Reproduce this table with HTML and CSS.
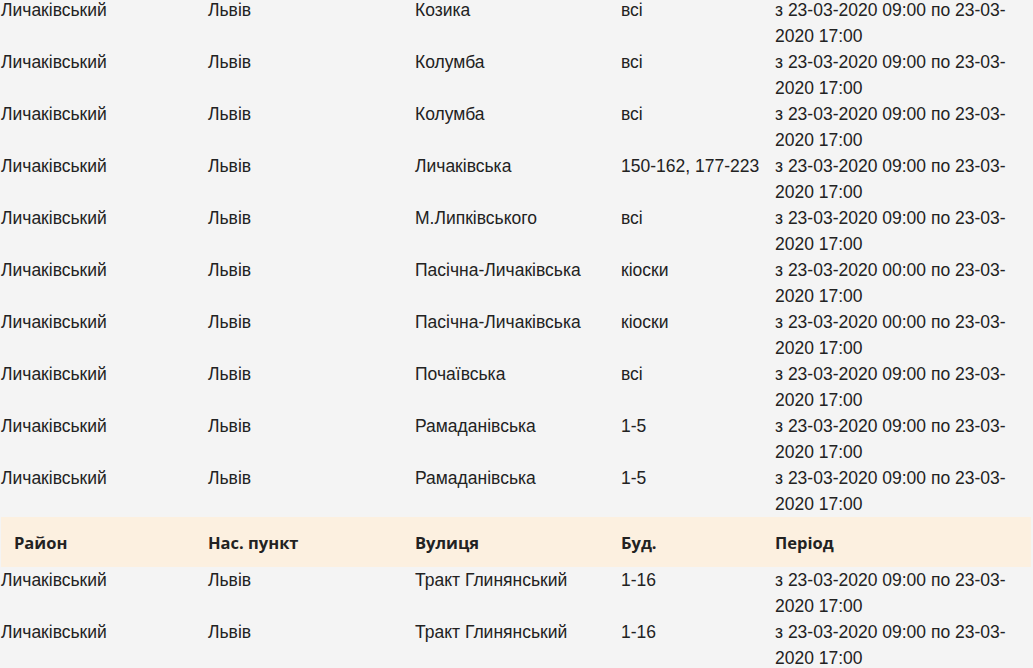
FILE: index.html
```html
<!DOCTYPE html>
<html lang="uk">
<head>
<meta charset="utf-8">
<title>Відключення</title>
<link rel="stylesheet" href="styles.css">
</head>
<body>
<div class="wrap">
<table class="outages">
<colgroup>
<col class="c1"><col class="c2"><col class="c3"><col class="c4"><col class="c5">
</colgroup>
<tbody>
<tr><td>Личаківський</td><td>Львів</td><td>Козика</td><td>всі</td><td>з 23-03-2020 09:00 по 23-03-<wbr>2020 17:00</td></tr>
<tr><td>Личаківський</td><td>Львів</td><td>Колумба</td><td>всі</td><td>з 23-03-2020 09:00 по 23-03-<wbr>2020 17:00</td></tr>
<tr><td>Личаківський</td><td>Львів</td><td>Колумба</td><td>всі</td><td>з 23-03-2020 09:00 по 23-03-<wbr>2020 17:00</td></tr>
<tr><td>Личаківський</td><td>Львів</td><td>Личаківська</td><td>150-162, 177-223</td><td>з 23-03-2020 09:00 по 23-03-<wbr>2020 17:00</td></tr>
<tr><td>Личаківський</td><td>Львів</td><td>М.Липківського</td><td>всі</td><td>з 23-03-2020 09:00 по 23-03-<wbr>2020 17:00</td></tr>
<tr><td>Личаківський</td><td>Львів</td><td>Пасічна-Личаківська</td><td>кіоски</td><td>з 23-03-2020 00:00 по 23-03-<wbr>2020 17:00</td></tr>
<tr><td>Личаківський</td><td>Львів</td><td>Пасічна-Личаківська</td><td>кіоски</td><td>з 23-03-2020 00:00 по 23-03-<wbr>2020 17:00</td></tr>
<tr><td>Личаківський</td><td>Львів</td><td>Почаївська</td><td>всі</td><td>з 23-03-2020 09:00 по 23-03-<wbr>2020 17:00</td></tr>
<tr><td>Личаківський</td><td>Львів</td><td>Рамаданівська</td><td>1-5</td><td>з 23-03-2020 09:00 по 23-03-<wbr>2020 17:00</td></tr>
<tr><td>Личаківський</td><td>Львів</td><td>Рамаданівська</td><td>1-5</td><td>з 23-03-2020 09:00 по 23-03-<wbr>2020 17:00</td></tr>
<tr class="head"><th class="first">Район</th><th>Нас. пункт</th><th>Вулиця</th><th>Буд.</th><th>Період</th></tr>
<tr><td>Личаківський</td><td>Львів</td><td>Тракт Глинянський</td><td>1-16</td><td>з 23-03-2020 09:00 по 23-03-<wbr>2020 17:00</td></tr>
<tr><td>Личаківський</td><td>Львів</td><td>Тракт Глинянський</td><td>1-16</td><td>з 23-03-2020 09:00 по 23-03-<wbr>2020 17:00</td></tr>
</tbody>
</table>
</div>
</body>
</html>
```

FILE: styles.css
```css
html, body {
  margin: 0;
  padding: 0;
  background: #f4f4f4;
  overflow: hidden;
}

.wrap {
  padding-left: 1px;
  margin-top: -3px;
}

.outages {
  width: 1030px;
  table-layout: fixed;
  border-collapse: collapse;
  font-family: "Liberation Sans", Arial, sans-serif;
  font-size: 17.5px;
  color: #222;
}

.c1 { width: 207px; }
.c2 { width: 207px; }
.c3 { width: 206px; }
.c4 { width: 154px; }
.c5 { width: 256px; }

.outages td {
  padding: 0;
  vertical-align: top;
  line-height: 26px;
  height: 52px;
  box-sizing: border-box;
}

.outages .head {
  background: #fcf0e0;
}

.outages th {
  font-family: "Open Sans", "Liberation Sans", sans-serif;
  font-weight: 700;
  font-size: 16.5px;
  text-align: left;
  line-height: 26px;
  padding: 13px 0 11px;
  color: #222;
}

.outages th.first {
  padding-left: 13px;
}
```
